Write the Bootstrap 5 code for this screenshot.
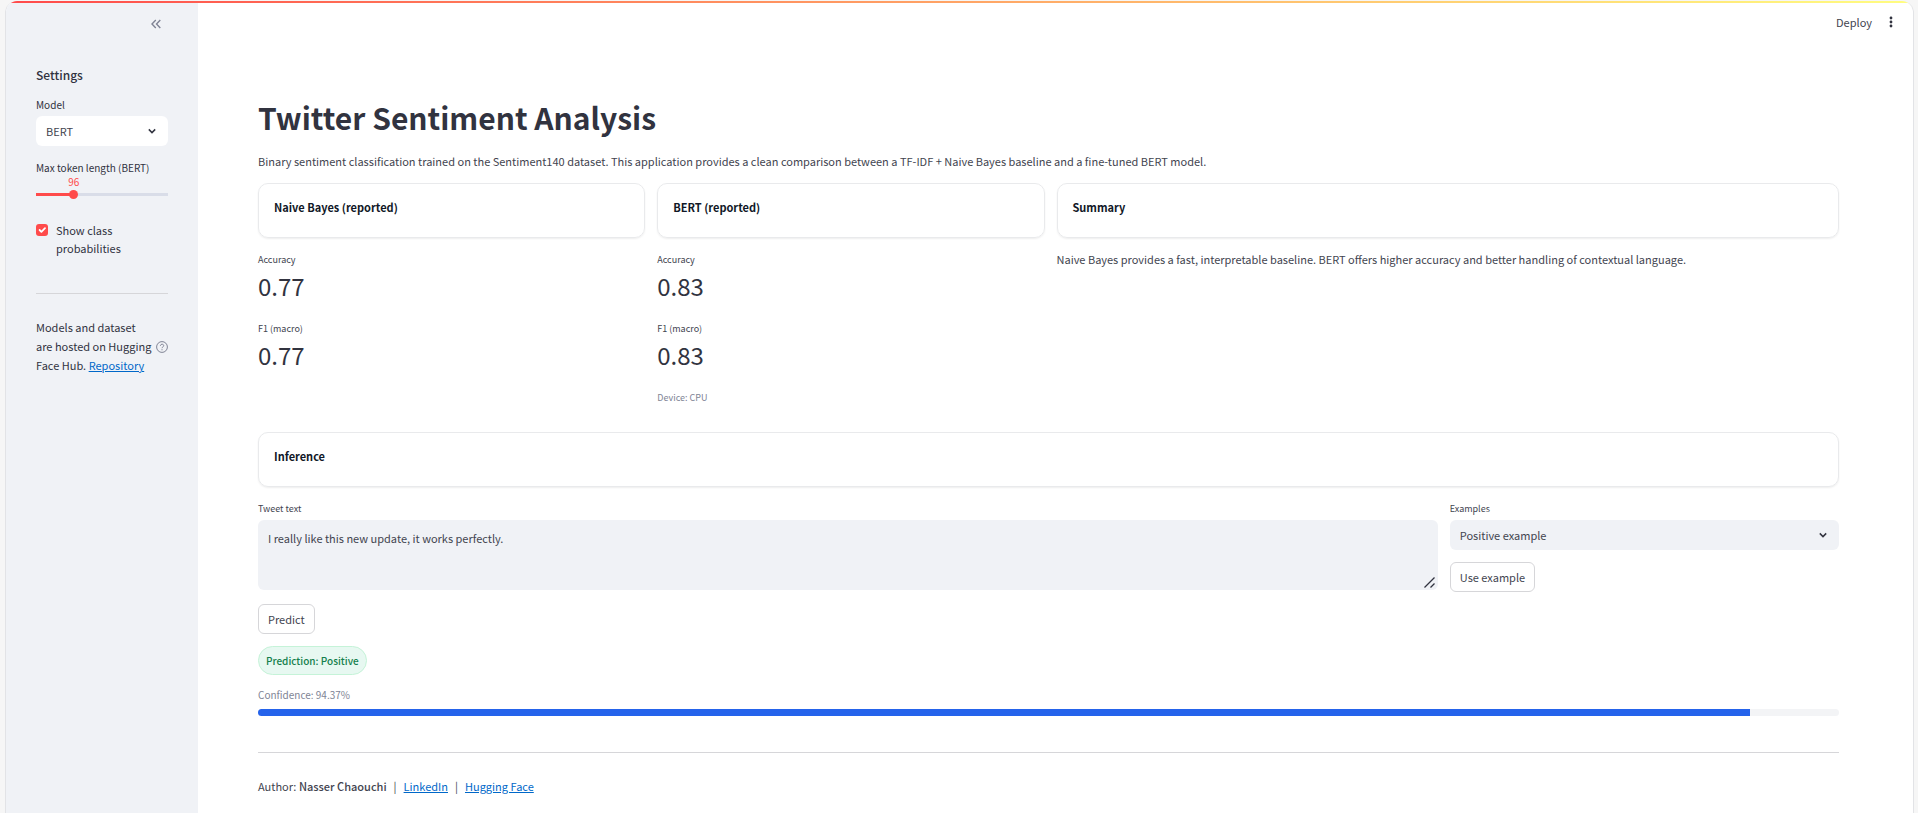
<!DOCTYPE html>
<html lang="en">
<head>
<meta charset="utf-8">
<meta name="viewport" content="width=device-width, initial-scale=1">
<title>Twitter Sentiment Analysis</title>
<link href="https://cdn.jsdelivr.net/npm/bootstrap@5.3.0/dist/css/bootstrap.min.css" rel="stylesheet">
<style>
  :root { --ink: #31333f; --soft-ink: #42444f; --panel: #f0f2f6; --accent: #ff4b4b; --link: #0068c9; --line: #d6d6d9; }
  body { background: #f6f6f6; color: var(--ink); font-family: "Noto Sans CJK SC", "Noto Sans", sans-serif; font-size: 11px; line-height: 19px; }
  a { color: var(--link); }
  .app-shell { min-height: calc(100vh - 1px); margin: 1px 4px 0 5px; background: #fff; border: 1px solid #e2e3e6; border-width: 0 1px; border-radius: 12px 12px 0 0; overflow: hidden; }
  .top-strip { height: 2px; background: linear-gradient(90deg, #ff4b4b, #fffd80); }
  .side-panel { flex: 0 0 192px; background: var(--panel); padding: 11px 30px; }
  .collapse-btn { width: 20px; height: 20px; margin-right: 2px; color: #808495; }
  .side-title { font-size: 12px; line-height: 20px; font-weight: 500; margin: 31px 0 12px; }
  .field-label { display: block; font-size: 10px; line-height: 16px; margin: 0 0 3px; }
  .field { background-color: var(--panel); border: 0; border-radius: 6px; color: var(--soft-ink); font-size: 11px; line-height: 18px; padding: 6px 10px; }
  .form-select.field { height: 30px; background-image: url("data:image/svg+xml,%3Csvg xmlns='http://www.w3.org/2000/svg' viewBox='0 0 10 10'%3E%3Cpath d='M1.8 3.4 5 6.6l3.2-3.2' fill='none' stroke='%2331333f' stroke-width='1.5'/%3E%3C/svg%3E"); background-size: 10px 10px; background-position: right 11px center; }
  .side-panel .field { background-color: #fff; }
  .range-label { margin: 14px 0 0; }
  .range-value { display: block; width: 20px; text-align: center; font-size: 10px; line-height: 12px; color: var(--accent); }
  .range-input { display: block; appearance: none; width: calc(100% + 8px); height: 9px; margin: 2px -4px 0; background: linear-gradient(90deg, var(--accent) var(--fill), #d9dde8 var(--fill)) no-repeat center / calc(100% - 8px) 3px; }
  .range-input::-webkit-slider-thumb { appearance: none; width: 9px; height: 9px; border-radius: 50%; background: var(--accent); }
  .range-input::-moz-range-thumb { width: 9px; height: 9px; border: 0; border-radius: 50%; background: var(--accent); }
  .form-check.prob-check { min-height: 0; padding-left: 20px; margin: 22px 0 0; line-height: 18px; }
  .prob-check .form-check-input { width: 12px; height: 12px; margin: 3px 0 0 -20px; border: 0; border-radius: 3px; }
  .prob-check .form-check-input:checked { background-color: var(--accent); }
  .rule { height: 1px; margin: 36px 0 24px; border: 0; opacity: 1; background: var(--line); }
  .help-btn { width: 12px; height: 12px; color: #808495; }
  .top-actions { height: 38px; padding: 0 20px; gap: 17px; }
  .main-area { padding: 55px 74px 16px 60px; }
  .main-area p, .main-area footer, .metric dt, .main-area .field-label { color: var(--soft-ink); }
  .main-title { font-size: 30px; line-height: 42px; font-weight: 700; margin: 0 0 14px; }
  .split { display: flex; gap: 12px; }
  .quarter { flex: 1 1 calc(25% - 13px); min-width: 0; }
  .half { flex: 1 1 calc(50% - 13px); min-width: 0; }
  .three-quarter { flex: 1 1 calc(75% - 13px); min-width: 0; }
  .panel-card { height: 55px; padding: 13px 15px; border: 1px solid #e9eaec; border-radius: 10px; box-shadow: 0 1px 2px rgba(0,0,0,.07); margin-bottom: 14px; }
  .panel-card h2 { font-size: 11px; line-height: 20px; font-weight: 700; color: #111827; margin: 0; }
  .half p { line-height: 14px; }
  .metric { margin: 0 0 17px; }
  .metric dt { font-size: 9px; line-height: 16px; font-weight: 400; }
  .metric dd { font-size: 24px; line-height: 36px; margin: 0; }
  .main-area .caption { font-size: 9px; line-height: 16px; color: #808495; margin: 0; }
  .main-area .caption-lg { font-size: 10px; margin: 12px 0 6px; }
  .inference { margin-top: 26px; }
  .field-label.small-label { font-size: 9px; }
  .tweet-box { display: block; height: 70px; padding: 9px 10px; }
  .tweet-box::-webkit-resizer { background: url("data:image/svg+xml,%3Csvg xmlns='http://www.w3.org/2000/svg' width='15' height='15'%3E%3Cpath d='M1.500 12.500 11.500 2.500M7.500 12.500 11.500 8.500' stroke='%2331333f' stroke-width='1.300'/%3E%3C/svg%3E") no-repeat; }
  .action-btn { --bs-btn-font-size: 11px; --bs-btn-line-height: 18px; --bs-btn-padding-y: 5px; --bs-btn-padding-x: 9px; --bs-btn-color: #42444f; --bs-btn-border-color: #d6d6d9; --bs-btn-border-radius: 6px; }
  .stacked { display: block; margin-top: 12px; }
  .result-pill { display: inline-block; font-size: 10px; line-height: 17px; font-weight: 500; padding: 5px 7px; border: 1px solid #c5f3d8; border-radius: 15px; background: #e7f8f1; color: #15804d; }
  .progress.meter { height: 7px; border-radius: 4px; background: #f3f4f6; }
  .meter .progress-bar { background: #2563eb; }
  .divider { margin: 0 7px; }
</style>
</head>
<body>
<div class="app-shell d-flex flex-column">
  <div class="top-strip"></div>
  <div class="d-flex flex-grow-1">
    <aside class="side-panel">
      <div class="d-flex justify-content-end">
        <button type="button" class="collapse-btn btn p-0 border-0 d-flex align-items-center justify-content-center" aria-label="Collapse sidebar">
          <svg width="10" height="10" viewBox="0 0 10 10" fill="none" stroke="currentColor" stroke-width="1.400"><path d="M4.800 1 1 5l3.800 4M9.300 1 5.500 5l3.800 4"/></svg>
        </button>
      </div>
      <h2 class="side-title">Settings</h2>
      <label class="field-label" for="model">Model</label>
      <select id="model" class="form-select field"><option>BERT</option><option>Naive Bayes</option></select>
      <label class="field-label range-label" for="tokens">Max token length (BERT)</label>
      <output class="range-value" for="tokens" style="margin-left:calc(28.6% - 10px)">96</output>
      <input id="tokens" class="range-input" type="range" min="32" max="256" value="96" style="--fill:28.6%">
      <div class="form-check prob-check">
        <input id="probs" class="form-check-input" type="checkbox" checked>
        <label class="form-check-label" for="probs">Show class probabilities</label>
      </div>
      <hr class="rule">
      <div class="d-flex align-items-center justify-content-between">
        <div class="text-nowrap">Models and dataset<br>are hosted on Hugging<br>Face Hub. <a href="#repository">Repository</a></div>
        <button type="button" class="help-btn btn p-0 border-0 d-flex" aria-label="Help">
          <svg width="12" height="12" viewBox="0 0 12 12" fill="none" stroke="currentColor"><circle cx="6" cy="6" r="5.400"/><path d="M4.400 4.800c0-2.100 3.300-2.100 3.300-.1C7.700 5.900 6 5.900 6 7.200M6 8.200v1.100"/></svg>
        </button>
      </div>
    </aside>
    <div class="flex-grow-1">
      <header class="top-actions d-flex justify-content-end align-items-center">
        <button type="button" class="btn p-0 border-0 action-btn">Deploy</button>
        <button type="button" class="btn p-0 border-0 d-flex" aria-label="Menu">
          <svg width="4" height="12" viewBox="0 0 4 12" fill="#31333f"><circle cx="2" cy="2" r="1.400"/><circle cx="2" cy="6" r="1.400"/><circle cx="2" cy="10" r="1.400"/></svg>
        </button>
      </header>
      <main class="main-area">
        <h1 class="main-title">Twitter Sentiment Analysis</h1>
        <p class="mb-0">Binary sentiment classification trained on the Sentiment140 dataset. This application provides a clean comparison between a TF-IDF + Naive Bayes baseline and a fine-tuned BERT model.</p>
        <div class="split stacked d-flex">
          <section class="quarter">
            <div class="panel-card"><h2>Naive Bayes (reported)</h2></div>
            <dl class="metric"><dt>Accuracy</dt><dd>0.77</dd></dl>
            <dl class="metric"><dt>F1 (macro)</dt><dd>0.77</dd></dl>
          </section>
          <section class="quarter">
            <div class="panel-card"><h2>BERT (reported)</h2></div>
            <dl class="metric"><dt>Accuracy</dt><dd>0.83</dd></dl>
            <dl class="metric"><dt>F1 (macro)</dt><dd>0.83</dd></dl>
            <p class="caption">Device: CPU</p>
          </section>
          <section class="half">
            <div class="panel-card"><h2>Summary</h2></div>
            <p class="mb-0">Naive Bayes provides a fast, interpretable baseline. BERT offers higher accuracy and better handling of contextual language.</p>
          </section>
        </div>
        <div class="panel-card inference"><h2>Inference</h2></div>
        <div class="split">
          <div class="three-quarter">
            <label class="field-label small-label" for="tweet">Tweet text</label>
            <textarea id="tweet" class="form-control field tweet-box">I really like this new update, it works perfectly.</textarea>
          </div>
          <div class="quarter">
            <label class="field-label small-label" for="examples">Examples</label>
            <select id="examples" class="form-select field"><option>Positive example</option><option>Negative example</option></select>
            <button type="button" class="btn action-btn stacked">Use example</button>
          </div>
        </div>
        <button type="button" class="btn action-btn stacked">Predict</button>
        <div class="stacked d-flex"><span class="result-pill">Prediction: Positive</span></div>
        <p class="caption caption-lg">Confidence: 94.37%</p>
        <div class="progress meter" role="progressbar" aria-label="Confidence" aria-valuenow="94.37" aria-valuemin="0" aria-valuemax="100"><div class="progress-bar" style="width:94.37%"></div></div>
        <hr class="rule">
        <footer>Author: <strong class="fw-medium">Nasser Chaouchi</strong><span class="divider">|</span><a href="#linkedin">LinkedIn</a><span class="divider">|</span><a href="#huggingface">Hugging Face</a></footer>
      </main>
    </div>
  </div>
</div>
<script src="https://cdn.jsdelivr.net/npm/bootstrap@5.3.0/dist/js/bootstrap.bundle.min.js"></script>
</body>
</html>
